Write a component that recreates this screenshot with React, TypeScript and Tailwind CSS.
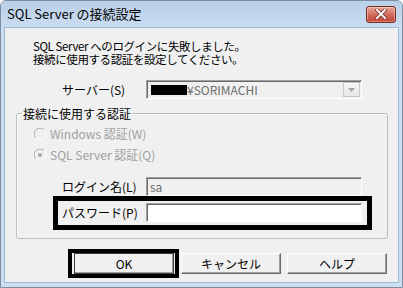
import React from 'react'

function CloseButton() {
  return (
    <div className="w-[30px] h-[17px] rounded-[3px] border border-[#7a2a22] bg-gradient-to-b from-[#e6a99d] via-[#d26b5c] to-[#c2432f] flex items-center justify-center shadow-[inset_0_0_0_1px_rgba(255,255,255,0.35)]">
      <svg width="12" height="10" viewBox="0 0 12 10">
        <path d="M2 1 L10 9 M10 1 L2 9" stroke="#5a1a14" strokeWidth="3.2" strokeLinecap="square" />
        <path d="M2 1 L10 9 M10 1 L2 9" stroke="#ffffff" strokeWidth="2" strokeLinecap="square" />
      </svg>
    </div>
  )
}

function Radio({ checked }: { checked?: boolean }) {
  return (
    <svg width="12" height="12" viewBox="0 0 12 12" className="shrink-0">
      <path d="M10.2 1.8 A5.5 5.5 0 0 0 1.8 10.2" fill="none" stroke="#a8a8a8" strokeWidth="1" />
      <path d="M1.8 10.2 A5.5 5.5 0 0 0 10.2 1.8" fill="none" stroke="#ffffff" strokeWidth="1" />
      {checked && <circle cx="6" cy="6" r="2" fill="#a8a8a8" />}
    </svg>
  )
}

const sunken =
  'border border-t-[#a0a0a0] border-l-[#a0a0a0] border-b-white border-r-white shadow-[inset_1px_1px_0_#696969]'

const btn =
  'w-[100px] h-[21px] flex items-center justify-center bg-[#f0f0f0] border border-t-white border-l-white border-b-[#696969] border-r-[#696969] shadow-[inset_-1px_-1px_0_#a0a0a0]'

export default function App() {
  return (
    <div className="w-[403px] h-[288px] bg-white overflow-hidden font-['Noto_Sans_CJK_JP',sans-serif] text-[12px] text-black">
      <div className="w-full h-full flex flex-col rounded-t-[6px] border border-[#7d8ea3] bg-[#cddef0] px-[3px] pb-[4px]">
        {/* title bar */}
        <div className="h-[26px] flex items-center justify-between -mx-[3px] px-[6px] rounded-t-[5px] bg-gradient-to-b from-[#b9d0ea] to-[#cadcf0]">
          <span className="text-[13px] leading-[16px]">SQL Server の接続設定</span>
          <CloseButton />
        </div>

        {/* client */}
        <div className="flex-1 flex flex-col bg-[#f0f0f0] border border-[#9bbcd8]">
          <div className="ml-[28px] mt-[12px] text-[11.5px] leading-[13px] tracking-[-0.4px]">
            <p>SQL Server へのログインに失敗しました。</p>
            <p>接続に使用する認証を設定してください。</p>
          </div>

          {/* server */}
          <div className="flex items-center ml-[57px] mt-[14px]">
            <span className="w-[84px] leading-[14px]">サーバー(S)</span>
            <div className={`w-[216px] h-[19px] bg-[#f0f0f0] flex items-center pl-[4px] pr-[1px] ${sunken}`}>
              <span className="w-[36px] h-[10px] bg-black" />
              <span className="flex-1 text-[#6d6d6d] leading-[14px]">¥SORIMACHI</span>
              <div className="w-[17px] h-[15px] border border-[#c8c8c8] bg-gradient-to-b from-[#f6f6f6] to-[#e6e6e6] flex items-center justify-center">
                <svg width="7" height="4" viewBox="0 0 7 4">
                  <path d="M0 0 L7 0 L3.5 4 Z" fill="#a0a0a0" />
                </svg>
              </div>
            </div>
          </div>

          {/* auth group */}
          <fieldset className="ml-[11px] mt-[8px] w-[372px] border border-[#bcbcbc] rounded-[3px] pb-[8px] shadow-[inset_1px_1px_0_#ffffff]">
            <legend className="ml-[5px] px-[1px] leading-[13px]">接続に使用する認証</legend>

            <div className="flex items-center gap-[4px] ml-[17px] mt-[6px] h-[16px] text-[#a0a0a0]">
              <Radio />
              <span className="leading-[14px]">Windows 認証(W)</span>
            </div>
            <div className="flex items-center gap-[4px] ml-[17px] mt-[5px] h-[16px] text-[#a0a0a0]">
              <Radio checked />
              <span className="leading-[14px]">SQL Server 認証(Q)</span>
            </div>

            <div className="flex items-center ml-[45px] mt-[14px]">
              <span className="w-[84px] leading-[14px]">ログイン名(L)</span>
              <div className={`w-[216px] h-[19px] bg-[#f0f0f0] flex items-center pl-[3px] ${sunken}`}>
                <span className="text-[#6d6d6d] leading-[14px]">sa</span>
              </div>
            </div>

            <div className="ml-[36px] w-[319px] border-[5px] border-black flex items-center pl-[4px] pt-[2px] pb-[3px]">
              <span className="w-[84px] leading-[14px]">パスワード(P)</span>
              <div className={`w-[216px] h-[19px] bg-white ${sunken}`} />
            </div>
          </fieldset>

          {/* buttons */}
          <div className="flex items-center ml-[63px] mt-[10px]">
            <div className="border-[4px] border-black pl-[2px] pr-[1px]">
              <div className={`${btn} outline outline-1 outline-[#3c3c3c] -outline-offset-1`}>OK</div>
            </div>
            <div className={`${btn} ml-[2px]`}>キャンセル</div>
            <div className={`${btn} ml-[6px]`}>ヘルプ</div>
          </div>
        </div>
      </div>
    </div>
  )
}
